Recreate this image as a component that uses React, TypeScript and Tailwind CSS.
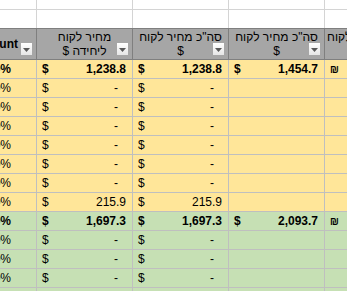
import React from "react";

const FONT = { fontFamily: '"Liberation Sans", Arial, "DejaVu Sans", sans-serif' };

function FilterBtn() {
  return (
    <div className="absolute right-[3px] bottom-[3px] w-[13px] h-[14px] border border-[#a6a6a6] bg-gradient-to-b from-white to-[#e6e6e6] flex items-center justify-center">
      <svg width="7" height="4" viewBox="0 0 7 4" className="mt-[2px]">
        <polygon points="0,0 7,0 3.5,4" fill="#595959" />
      </svg>
    </div>
  );
}

type Row = {
  bold: boolean;
  a: string;
  b: string;
  c: string | null;
  d: boolean;
};

function Money({ v, bold }: { v: string; bold: boolean }) {
  return (
    <div className={`flex items-center justify-between pl-[5px] pr-[6px] w-full ${bold ? "font-bold" : ""}`}>
      <span>$</span>
      {v === "-" ? <span className="mr-[8px]">-</span> : <span>{v}</span>}
    </div>
  );
}

function DataRow({ r, bg }: { r: Row; bg: string }) {
  const cell = "h-[19px] border-r border-b border-[#bfbfbf] flex items-center shrink-0";
  return (
    <div className={`flex ${bg}`}>
      <div className={`${cell} w-[37px] justify-end pr-[25px] overflow-hidden ${r.bold ? "font-bold" : ""}`}>
        <span className="whitespace-nowrap">0%</span>
      </div>
      <div className={`${cell} w-[96px]`}>
        <Money v={r.a} bold={r.bold} />
      </div>
      <div className={`${cell} w-[96px]`}>
        <Money v={r.b} bold={r.bold} />
      </div>
      <div className={`${cell} w-[96px]`}>{r.c !== null ? <Money v={r.c} bold={r.bold} /> : null}</div>
      <div className={`${cell} w-[96px] pl-[5px]`}>
        {r.d ? <span className="text-[10px] font-bold">₪</span> : null}
      </div>
    </div>
  );
}

export default function App() {
  const yellow: Row[] = [
    { bold: true, a: "1,238.8", b: "1,238.8", c: "1,454.7", d: true },
    { bold: false, a: "-", b: "-", c: null, d: false },
    { bold: false, a: "-", b: "-", c: null, d: false },
    { bold: false, a: "-", b: "-", c: null, d: false },
    { bold: false, a: "-", b: "-", c: null, d: false },
    { bold: false, a: "-", b: "-", c: null, d: false },
    { bold: false, a: "-", b: "-", c: null, d: false },
    { bold: false, a: "215.9", b: "215.9", c: null, d: false },
  ];
  const green: Row[] = [
    { bold: true, a: "1,697.3", b: "1,697.3", c: "2,093.7", d: true },
    { bold: false, a: "-", b: "-", c: null, d: false },
    { bold: false, a: "-", b: "-", c: null, d: false },
    { bold: false, a: "-", b: "-", c: null, d: false },
    { bold: false, a: "-", b: "-", c: null, d: false },
  ];
  const white = "border-r border-[#d4d4d4] shrink-0";
  const hcell = "relative h-[32px] border-r border-t border-b border-[#7f7f7f] shrink-0 bg-[#a6a6a6]";
  return (
    <div className="w-[347px] h-[291px] overflow-hidden bg-white text-[12px] text-black" style={FONT}>
      <div className="w-[480px]">
        <div className="flex h-[10px] border-b border-[#d4d4d4]">
          <div className={`${white} w-[37px]`} />
          <div className={`${white} w-[96px]`} />
          <div className={`${white} w-[96px]`} />
          <div className={`${white} w-[96px]`} />
          <div className={`${white} w-[96px]`} />
        </div>
        <div className="flex h-[18px]">
          <div className={`${white} w-[37px]`} />
          <div className={`${white} w-[96px]`} />
          <div className={`${white} w-[96px]`} />
          <div className={`${white} w-[96px]`} />
          <div className={`${white} w-[96px]`} />
        </div>
        <div className="flex">
          <div className={`${hcell} w-[37px] flex items-center justify-end pr-[18px] overflow-hidden`}>
            <span className="whitespace-nowrap font-bold">Discount</span>
            <FilterBtn />
          </div>
          <div className={`${hcell} w-[96px] flex flex-col items-center justify-center leading-[14px]`} dir="rtl">
            <span>מחיר לקוח</span>
            <span>ליחידה $</span>
            <FilterBtn />
          </div>
          <div className={`${hcell} w-[96px] flex flex-col items-center justify-center leading-[14px]`} dir="rtl">
            <span>סה"כ מחיר לקוח</span>
            <span>$</span>
            <FilterBtn />
          </div>
          <div className={`${hcell} w-[96px] flex flex-col items-center justify-center leading-[14px]`} dir="rtl">
            <span>סה"כ מחיר לקוח</span>
            <span>$</span>
            <FilterBtn />
          </div>
          <div className={`${hcell} w-[96px] flex flex-col items-start justify-center leading-[14px] pl-[2px]`}>
            <span dir="rtl" className="whitespace-nowrap">סה"כ מחיר לקוח</span>
            <span className="invisible">₪</span>
          </div>
        </div>
        {yellow.map((r, i) => (
          <DataRow key={"y" + i} r={r} bg="bg-[#ffe699]" />
        ))}
        {green.map((r, i) => (
          <DataRow key={"g" + i} r={r} bg="bg-[#c6e0b4]" />
        ))}
      </div>
    </div>
  );
}
